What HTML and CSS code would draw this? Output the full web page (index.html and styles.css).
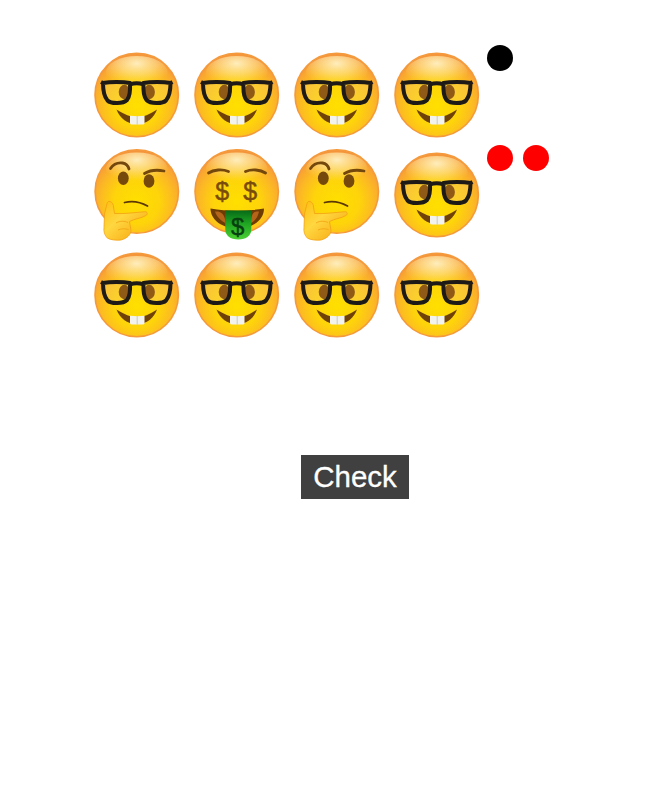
FILE: index.html
```html
<!DOCTYPE html>
<html lang="en">
<head>
<meta charset="utf-8">
<title>Emoji check</title>
<link rel="stylesheet" href="styles.css">
</head>
<body>
<svg class="defs" width="0" height="0" aria-hidden="true">
  <defs>
    <radialGradient id="face" cx="50%" cy="62%" r="60%">
      <stop offset="0" stop-color="#ffdf00"/>
      <stop offset=".45" stop-color="#fed40a"/>
      <stop offset=".72" stop-color="#fcbb22"/>
      <stop offset=".9" stop-color="#f9a631"/>
      <stop offset="1" stop-color="#f4953c"/>
    </radialGradient>
    <radialGradient id="shine" cx="50%" cy="22%" r="62%">
      <stop offset="0" stop-color="#fff6d0" stop-opacity=".88"/>
      <stop offset=".5" stop-color="#ffeeb0" stop-opacity=".5"/>
      <stop offset="1" stop-color="#ffe680" stop-opacity="0"/>
    </radialGradient>
    <linearGradient id="hand" x1="0" y1="0" x2="1" y2="1">
      <stop offset="0" stop-color="#ffbe10"/>
      <stop offset=".4" stop-color="#ffd740"/>
      <stop offset="1" stop-color="#f5a00a"/>
    </linearGradient>
    <linearGradient id="tongue" x1="0" y1="0" x2="0" y2="1">
      <stop offset="0" stop-color="#086a18"/>
      <stop offset=".45" stop-color="#1fa522"/>
      <stop offset="1" stop-color="#4ccf33"/>
    </linearGradient>
    <symbol id="nerd" viewBox="0 0 100 100">
      <circle class="disc" cx="49.700" cy="50" r="41.700" fill="url(#face)"/>
      <ellipse cx="49.700" cy="28" rx="31" ry="17" fill="url(#shine)"/>
      <path d="M16 38c7-1.500 20-1.500 27 0 .5 9-.5 14-3 17-4 4-16 4-19.500.5-3-3.500-4.500-8.500-4.500-17.500zM56.500 38c7-1.500 20-1.500 27 0 0 9-1.500 14-4.500 17.500-3.500 3.500-15.500 3.500-19.500-.5-2.500-3-3.500-8-3-17z" fill="#f8ca50" fill-opacity=".5"/>
      <ellipse cx="37.300" cy="47" rx="5.600" ry="7.200" fill="#8f5a16"/>
      <ellipse cx="62.300" cy="47" rx="5.600" ry="7.200" fill="#8f5a16"/>
      <path class="frame" d="M16 38c7-1.500 20-1.500 27 0 .5 9-.5 14-3 17-4 4-16 4-19.500.5-3-3.500-4.500-8.500-4.500-17.500zM56.500 38c7-1.500 20-1.500 27 0 0 9-1.500 14-4.500 17.500-3.500 3.500-15.500 3.500-19.500-.5-2.500-3-3.500-8-3-17zM43 39.500c4-1.500 9.500-1.500 13.500 0M16 38l-2-1M83.500 38l2-1"/>
      <path d="M29.500 64.500c8 5 14 7.500 20.500 7.500s12.500-2.500 20-7.500c-3 8.500-10 14.500-20 14.500s-17.500-6-20.500-14.500z" fill="#704208"/>
      <path d="M43 70.800c4.500.6 10 .6 14.500 0v7.200c0 1-1 1.500-2 1.500h-10.500c-1 0-2-.5-2-1.500z" fill="#f3f3ee"/>
      <path d="M50.200 71.200v8.300" stroke="#b9b9ae" stroke-width=".7"/>
    </symbol>
    <symbol id="think" viewBox="0 0 100 100">
      <circle class="disc" cx="49.800" cy="46.500" r="41.700" fill="url(#face)"/>
      <ellipse cx="49.800" cy="24.500" rx="31" ry="17" fill="url(#shine)"/>
      <path class="brow" d="M23.500 23.500c3-4.500 8-6 12-5.500 3 .5 5.500 2.500 6.500 6"/>
      <path class="brow" d="M57.500 28.500c5-3 12-4 19.500-2.500"/>
      <ellipse cx="36.300" cy="33.300" rx="5.400" ry="6.800" fill="#75480c"/>
      <ellipse cx="62" cy="36" rx="5.400" ry="6.800" fill="#75480c"/>
      <path class="lip" d="M37.500 57.500c8-2 16-.5 23 3.500"/>
      <path d="M23 56.500c2.500 1 3.500 3 3.500 5.500l1 6.500c10 .5 21-1 30.500-1.800 2.500 0 3 2.500 1 3.800-5 3-11 3-16.500 6l1.500 9c0 4-4 8-10 9.500-5 .5-10 0-13.500-1.800-3-3-4-6.500-3.500-10.700l.5-13.500 2.500-10.500c.5-1.500 1.500-2.500 3-2z" fill="url(#hand)" stroke="#f2a112" stroke-width=".8"/>
      <path d="M29 78c4-2.500 9-2 12-.5M31 85c3-1.500 7-1.500 10.500-.5" fill="none" stroke="#f2a112" stroke-width=".8"/>
    </symbol>
    <symbol id="money" viewBox="0 0 100 100">
      <circle class="disc" cx="49.700" cy="46.500" r="41.700" fill="url(#face)"/>
      <ellipse cx="49.700" cy="24.500" rx="31" ry="17" fill="url(#shine)"/>
      <path class="brow" d="M21.500 28c5-3.500 14-4 20-1.500"/>
      <path class="brow" d="M58.500 26.500c6-2.500 15-2 20 1.500"/>
      <text class="usd" x="35.300" y="55">$</text>
      <text class="usd" x="63.300" y="55">$</text>
      <path d="M23.500 63.500c17 3 36 3 53.500 0 0 11-11 20-26.500 20s-27-9-27-20z" fill="#6d3b04"/>
      <path d="M28 66.500c4-.5 10 .5 10.500 11.500-4-2-9-6-10.500-11.500zM72 66.500c-4-.5-8 .5-8 11.500 4-2 7-6 8-11.500z" fill="#b5651a"/>
      <path d="M38.300 65.500h26v19c0 6-5 10-13 10s-13-4-13-10z" fill="url(#tongue)"/>
      <text class="usd-dark" x="50.800" y="90">$</text>
    </symbol>
  </defs>
</svg>

<main class="page">
  <section class="board">
    <svg class="cell"><use href="#nerd"/></svg>
    <svg class="cell"><use href="#nerd"/></svg>
    <svg class="cell"><use href="#nerd"/></svg>
    <svg class="cell"><use href="#nerd"/></svg>
    <div class="dots"><span class="dot dot-black"></span></div>

    <svg class="cell"><use href="#think"/></svg>
    <svg class="cell"><use href="#money"/></svg>
    <svg class="cell"><use href="#think"/></svg>
    <svg class="cell"><use href="#nerd"/></svg>
    <div class="dots"><span class="dot dot-red"></span><span class="dot dot-red"></span></div>

    <svg class="cell"><use href="#nerd"/></svg>
    <svg class="cell"><use href="#nerd"/></svg>
    <svg class="cell"><use href="#nerd"/></svg>
    <svg class="cell"><use href="#nerd"/></svg>
    <div class="dots"></div>
  </section>
  <button class="check" type="button">Check</button>
</main>
</body>
</html>
```

FILE: styles.css
```css
html, body {
  margin: 0;
  padding: 0;
  background: #fff;
}

.defs {
  position: absolute;
}

.page {
  display: flex;
  flex-direction: column;
  align-items: flex-start;
  min-height: 807px;
  box-sizing: border-box;
  padding: 45px 0 0 87px;
}

.board {
  display: grid;
  grid-template-columns: repeat(4, 100px) auto;
  grid-auto-rows: 100px;
}

.cell {
  display: block;
  width: 100px;
  height: 100px;
}

.dots {
  display: flex;
  gap: 10px;
}

.dot {
  width: 26px;
  height: 26px;
  border-radius: 50%;
}

.dot-black { background: #000; }
.dot-red { background: #f00; }

.check {
  margin: 110px 0 0 214px;
  width: 108px;
  height: 44px;
  padding: 0;
  border: 0;
  background: #404040;
  color: #fff;
  font-family: "Liberation Sans", Arial, sans-serif;
  font-size: 29.5px;
  line-height: 44px;
  -webkit-text-stroke: 0.3px #fff;
}

.disc {
  stroke: #f59a3c;
  stroke-width: 1.6;
}

.frame {
  fill: none;
  stroke: #1d1a17;
  stroke-width: 4;
  stroke-linejoin: round;
}

.brow {
  fill: none;
  stroke: #74470c;
  stroke-width: 2.800;
  stroke-linecap: round;
}

.lip {
  fill: none;
  stroke: #5c3806;
  stroke-width: 1.800;
  stroke-linecap: round;
}

.usd, .usd-dark {
  font-family: "Liberation Sans", Arial, sans-serif;
  text-anchor: middle;
}

.usd {
  font-size: 25px;
  fill: #7a4c0c;
  stroke: #7a4c0c;
  stroke-width: .5;
}

.usd-dark {
  font-size: 24px;
  fill: #083f10;
  stroke: #083f10;
  stroke-width: .4;
}
```
